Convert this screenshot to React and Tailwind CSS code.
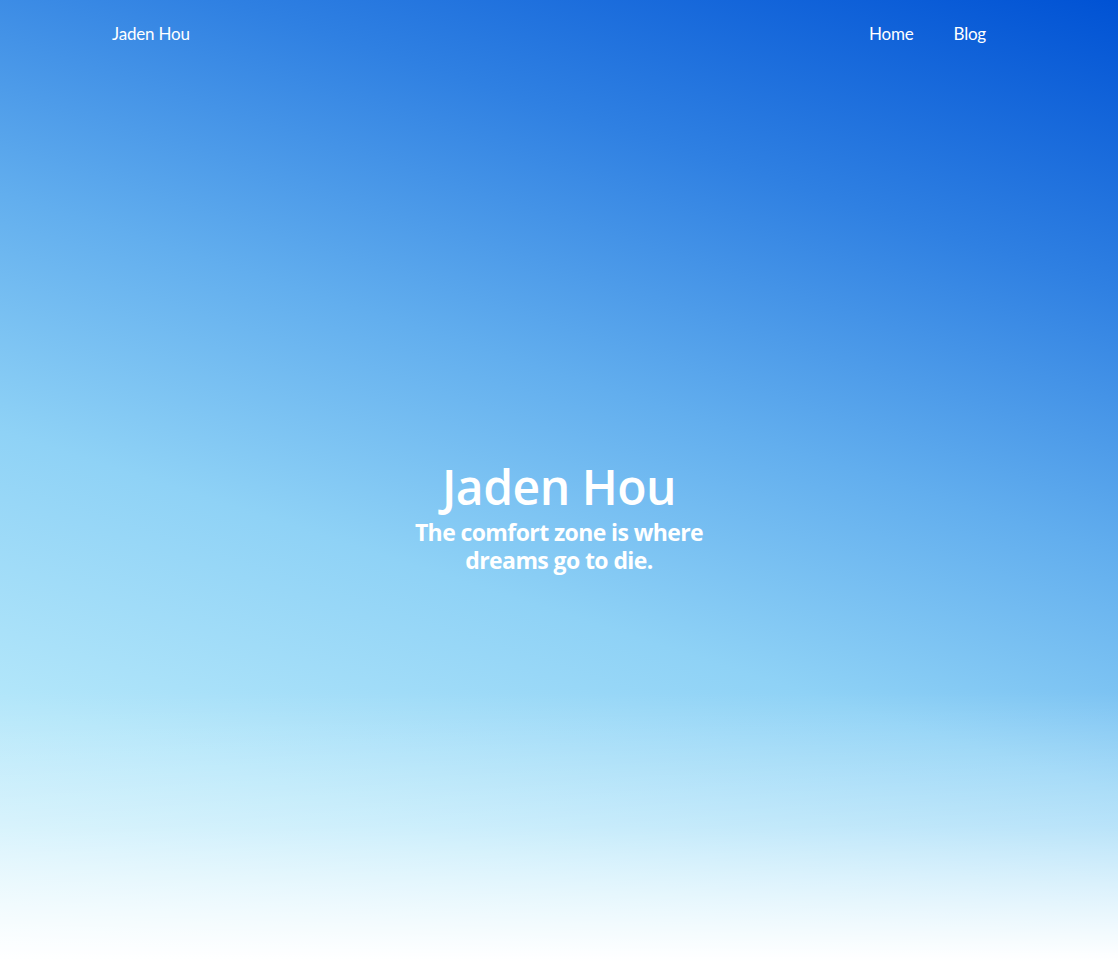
import React from 'react';

const navLinks = ['Home', 'Blog'];

export default function App() {
  return (
    <div className="h-screen w-full flex flex-col bg-[linear-gradient(to_bottom,rgba(255,255,255,0)_72%,rgba(255,255,255,0.35)_86%,#ffffff_100%),linear-gradient(198deg,#0052d4_0%,#2f80e2_22%,#62aeee_42%,#8fd2f6_60%,#b2e6fa_80%,#d4f3fc_100%)] text-white">
      {/* top bar */}
      <header className="h-[68px] shrink-0 flex items-center justify-between pl-[112px] pr-[132px] font-['Lato','Open_Sans',sans-serif] text-[17px]">
        <a className="tracking-[-0.2px]">Jaden Hou</a>
        <nav className="flex items-center gap-10">
          {navLinks.map((link) => (
            <a key={link} className="tracking-[-0.2px]">{link}</a>
          ))}
        </nav>
      </header>

      {/* hero */}
      <main className="flex-1 pt-[6px] flex flex-col items-center justify-center text-center font-['Open_Sans','Inter',sans-serif]">
        <h1 className="text-[48px] leading-[50px] font-semibold tracking-[-0.5px]">Jaden Hou</h1>
        <p className="mt-[6px] w-[310px] text-[23px] leading-[28px] font-bold tracking-[-0.6px]">
          The comfort zone is where dreams go to die.
        </p>
      </main>
    </div>
  );
}
